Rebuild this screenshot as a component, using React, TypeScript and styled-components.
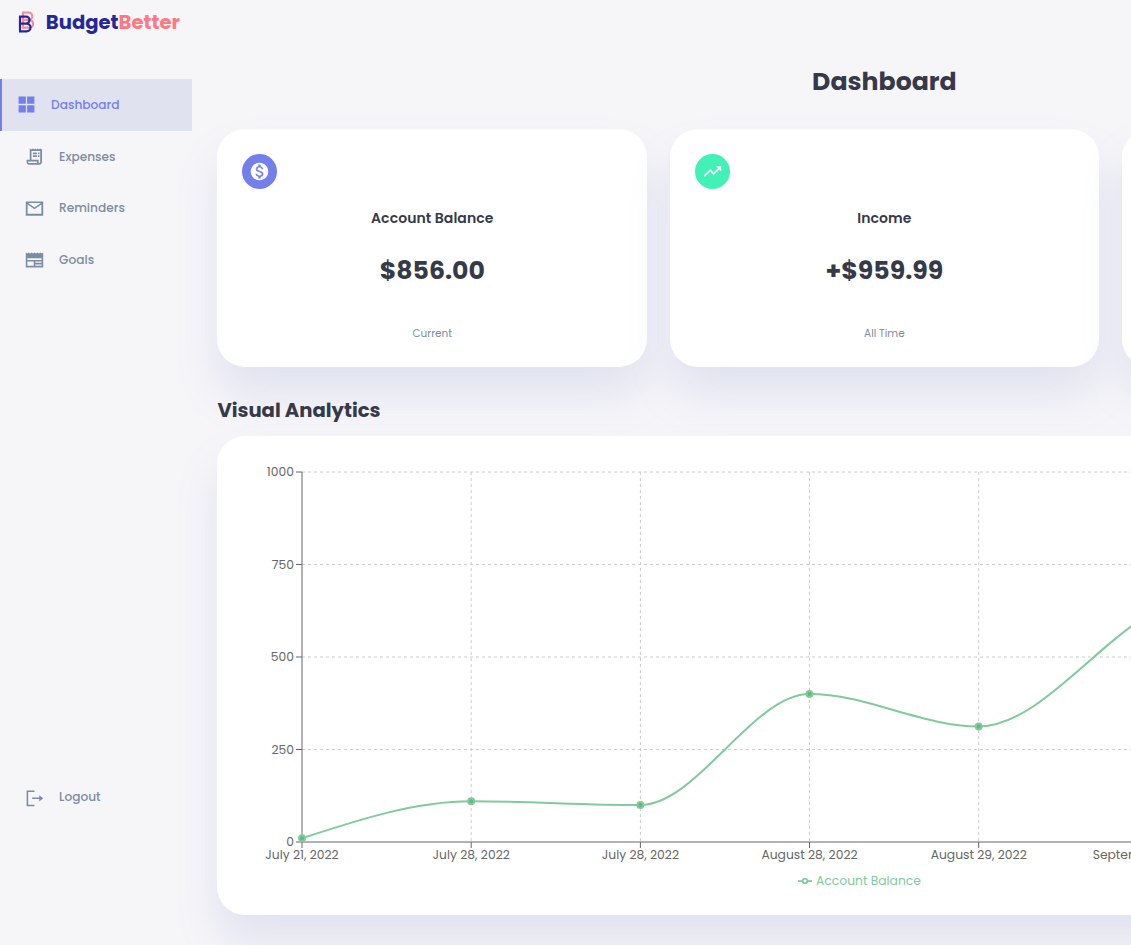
import React from "react";
import styled, { createGlobalStyle } from "styled-components";

const Global = createGlobalStyle`
  * { box-sizing: border-box; margin: 0; padding: 0; }
  html { font-size: 14px; overflow: hidden; }
  body { height: 945px; overflow: hidden; background: #f6f6f9; color: #363949;
    font-family: Poppins, Inter, "Open Sans", sans-serif; font-size: 12.32px; }
`;
const Layout = styled.div`
  display: grid;
  grid-template-columns: 192px 1334px;
  column-gap: 25.4px;
  width: 1131px;
  height: 945px;
`;
const Aside = styled.aside`
  display: flex;
  flex-direction: column;
  height: 945px;
`;
const Brand = styled.div`
  display: flex;
  align-items: center;
  height: 44px;
  padding-left: 17px;
  gap: 10.8px;
`;
const BrandName = styled.h2`
  font-size: 19.6px;
  line-height: 30px;
  font-weight: 700;
  color: #23279a;
  white-space: nowrap;
  span { color: #ff7782; }
`;
const Nav = styled.nav`
  display: flex;
  flex-direction: column;
  margin-top: 35px;
`;
const NavItem = styled.a<{ $active?: boolean; $bottom?: boolean }>`
  display: flex;
  align-items: center;
  gap: 15px;
  height: 51.6px;
  padding-top: ${(p) => (p.$active ? 0 : 0.7)}px;
  padding-left: ${(p) => (p.$active ? 15 : 25)}px;
  margin-top: ${(p) => (p.$bottom ? 485.5 : 0)}px;
  border-left: ${(p) => (p.$active ? "2px solid #7380ec" : "0")};
  background: ${(p) => (p.$active ? "rgba(132,139,200,0.18)" : "transparent")};
  color: ${(p) => (p.$active ? "#7380ec" : "#7d8da1")};
  font-size: 12.18px;
  font-weight: 500;
  svg { width: 19px; height: 19px; fill: currentColor; }
`;
const Main = styled.main`
  display: flex;
  flex-direction: column;
  padding-top: 62px;
`;
const Title = styled.h1`
  font-size: 25.2px;
  line-height: 40px;
  font-weight: 700;
  text-align: center;
`;
const Cards = styled.section`
  display: grid;
  grid-template-columns: repeat(3, 1fr);
  gap: 22.4px;
  margin-top: 27px;
`;
const Card = styled.article`
  height: 238px;
  padding: 25px;
  border-radius: 28px;
  background: #fff;
  box-shadow: 0 2rem 3rem rgba(132, 139, 200, 0.18);
  display: flex;
  flex-direction: column;
  align-items: center;
`;
const Badge = styled.div<{ $color: string }>`
  align-self: flex-start;
  display: flex;
  align-items: center;
  justify-content: center;
  width: 35px;
  height: 35px;
  border-radius: 50%;
  background: ${(p) => p.$color};
  svg { width: 21px; height: 21px; fill: #fff; }
`;
const CardLabel = styled.h3`
  margin-top: 18px;
  font-size: 14px;
  line-height: 22px;
  font-weight: 600;
  letter-spacing: 0.08px;
`;
const Amount = styled.h1`
  margin-top: 23px;
  font-size: 25.2px;
  line-height: 38px;
  font-weight: 700;
`;
const Period = styled.small`
  margin-top: 36px;
  font-size: 10.5px;
  line-height: 16px;
  color: #7d8da1;
`;
const Heading = styled.h2`
  margin-top: 28px;
  font-size: 19.6px;
  line-height: 30px;
  font-weight: 700;
`;
const ChartCard = styled.section`
  margin-top: 11px;
  height: 479px;
  border-radius: 28px;
  background: #fff;
  box-shadow: 0 2rem 3rem rgba(132, 139, 200, 0.18);
  svg { display: block; }
`;
const Label = styled.text<{ $accent?: boolean }>`
  font-size: 12.32px;
  fill: ${(p) => (p.$accent ? "#82ca9d" : "#666")};
`;

const Icon = ({ d }: { d: string }) => (
  <svg viewBox="0 0 24 24"><path d={d} /></svg>
);
const icons = {
  grid: "M2 2h9.2v9.2H2zM12.8 2H22v9.2h-9.2zM2 12.8h9.2V22H2zM12.8 12.8H22V22h-9.2z",
  receipt: "M20.5 3L19 2l-1.5 1L16 2l-1.500 1L13 2l-1.500 1L10 2 8.500 3 6 2v14H2v3c0 1.900 1.340 3.500 3 3.500h13c1.900 0 3.500-1.500 3.500-3.500V2zM15 20.300H5c-.55 0-1-.45-1-1v-1h11v2zm4.200-1c0 .55-.45 1-1 1s-1-.45-1-1v-3.300H8.200V5h11v14zM10 7h5v2h-5zm6.300 0h2v2h-2zM10 10.500h5v2h-5zm6.300 0h2v2h-2z",
  mail: "M1 3v18h22V3zm19.7 15.7H3.3V7l8.7 6 8.7-6zM12 10.6L4 5.2h16z",
  goals: "M1 3l1.8 1.5L4.7 3l1.8 1.5L8.3 3l1.9 1.5L12 3l1.8 1.5L15.7 3l1.8 1.5L19.3 3l1.9 1.5L23 3v19H1zM3 10.5v2h18v-2zM3 14.5V20h8v-5.5zM13 14.5v1.7h8v-1.7zM13 18.2V20h8v-1.8z",
  logout: "M2 3h10v2H4v16h8v2H2zM9 12h9V9l5 4-5 4v-3H9z",
  paid: "M12 2C6.48 2 2 6.48 2 12s4.48 10 10 10 10-4.48 10-10S17.52 2 12 2zm1.41 16.09V20h-2.67v-1.93c-1.71-.36-3.16-1.46-3.27-3.4h1.96c.1 1.05.82 1.87 2.65 1.87 1.96 0 2.4-.98 2.4-1.59 0-.83-.44-1.61-2.67-2.14-2.48-.6-4.18-1.62-4.18-3.67 0-1.72 1.39-2.84 3.11-3.21V4h2.67v1.95c1.86.45 2.79 1.86 2.85 3.39H14.3c-.05-1.11-.64-1.87-2.22-1.87-1.5 0-2.4.68-2.4 1.64 0 .84.65 1.39 2.67 1.91s4.18 1.39 4.18 3.91c-.01 1.83-1.38 2.83-3.12 3.16z",
  trend: "M16 6l2.29 2.29-4.88 4.88-4-4L2 16.59 3.41 18l6-6 4 4 6.3-6.29L22 12V6z",
};

const LogoMark = () => (
  <svg width="18" height="24" viewBox="0 0 18 24" fill="none" strokeWidth="2.2">
    <path stroke="#f98b93" d="M6 2.5h5.5a3.7 3.7 0 0 1 0 7.4H6zM6 9.9h6.2a3.9 3.9 0 0 1 0 7.8H6z" />
    <path stroke="#23279a" d="M2 6.6H9a3.5 3.5 0 0 1 0 7H4M4 13.6h5.6a3.9 3.9 0 0 1 0 7.8H2M3 6.6v14.8" />
  </svg>
);

const points = [
  { x: 85, y: 402.3, label: "July 21, 2022" },
  { x: 254.2, y: 365.3, label: "July 28, 2022" },
  { x: 423.4, y: 369, label: "July 28, 2022" },
  { x: 592.5, y: 258, label: "August 28, 2022" },
  { x: 761.7, y: 290.5, label: "August 29, 2022" },
  { x: 930.9, y: 179.3, label: "September 1, 2022" },
];
const levels = [
  { y: 36, label: "1000" },
  { y: 128.5, label: "750" },
  { y: 221, label: "500" },
  { y: 313.5, label: "250" },
  { y: 406, label: "0" },
];
const line =
  "M85 402.3C141.4 383.8 197.8 365.3 254.2 365.3C310.6 365.3 367 369 423.4 369C479.8 369 536.1 258 592.5 258C648.9 258 705.3 290.5 761.7 290.5C818.1 290.5 874.5 213 930.9 179.3";

const Chart = () => (
  <svg width="1334" height="479">
    <g stroke="#ccc" strokeDasharray="3 3">
      {levels.slice(0, 4).map((l) => <path key={l.label} d={`M85 ${l.y}H1310`} />)}
      {points.slice(1).map((p) => <path key={p.x} d={`M${p.x} 36V406`} />)}
    </g>
    <g stroke="#666">
      <path d="M85 36V406" />
      <path d="M85 406H1310" />
      {levels.map((l) => <path key={l.label} d={`M79 ${l.y}H85`} />)}
      {points.map((p) => <path key={p.x} d={`M${p.x} 406V412`} />)}
    </g>
    {levels.map((l) => (
      <Label key={l.label} x="77" y={l.y + 4} textAnchor="end">{l.label}</Label>
    ))}
    {points.map((p) => (
      <Label key={p.x} x={p.x} y="423" textAnchor="middle">{p.label}</Label>
    ))}
    <path d={line} fill="none" stroke="#82ca9d" strokeWidth="2" />
    {points.map((p) => (
      <circle key={p.x} cx={p.x} cy={p.y} r="3" fill="#5dba80" stroke="#82ca9d" strokeWidth="2" />
    ))}
    <g fill="none" stroke="#82ca9d" strokeWidth="1.75">
      <path d="M581 445h4.7M590.3 445h4.7" />
      <circle cx="588" cy="445" r="2.3" />
    </g>
    <Label $accent x="599" y="449">Account Balance</Label>
  </svg>
);

export default function App() {
  return (
    <>
      <Global />
      <Layout>
        <Aside>
          <Brand><LogoMark /><BrandName>Budget<span>Better</span></BrandName></Brand>
          <Nav>
            <NavItem $active><Icon d={icons.grid} />Dashboard</NavItem>
            <NavItem><Icon d={icons.receipt} />Expenses</NavItem>
            <NavItem><Icon d={icons.mail} />Reminders</NavItem>
            <NavItem><Icon d={icons.goals} />Goals</NavItem>
            <NavItem $bottom><Icon d={icons.logout} />Logout</NavItem>
          </Nav>
        </Aside>
        <Main>
          <Title>Dashboard</Title>
          <Cards>
            <Card>
              <Badge $color="#7380ec"><Icon d={icons.paid} /></Badge>
              <CardLabel>Account Balance</CardLabel><Amount>$856.00</Amount><Period>Current</Period>
            </Card>
            <Card>
              <Badge $color="#41f1b6"><Icon d={icons.trend} /></Badge>
              <CardLabel>Income</CardLabel><Amount>+$959.99</Amount><Period>All Time</Period>
            </Card>
            <Card />
          </Cards>
          <Heading>Visual Analytics</Heading>
          <ChartCard><Chart /></ChartCard>
        </Main>
      </Layout>
    </>
  );
}
